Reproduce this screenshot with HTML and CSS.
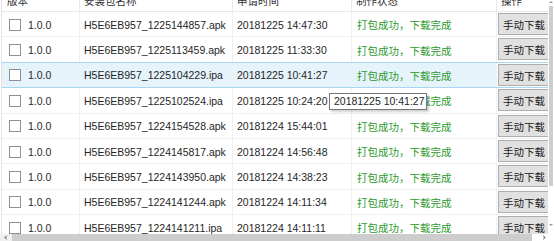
FILE: index.html
```html
<!DOCTYPE html>
<html lang="zh-CN">
<head>
<meta charset="utf-8">
<link rel="stylesheet" href="styles.css">
</head>
<body>
<div class="window">
  <div class="main">
    <div class="grid">
      <div class="row head">
        <div class="cell c1"><span class="htext">版本</span></div>
        <div class="cell"><span class="htext">安装包名称</span></div>
        <div class="cell"><span class="htext">申请时间</span></div>
        <div class="cell"><span class="htext">制作状态</span></div>
        <div class="cell"><span class="htext">操作</span></div>
      </div>
      <div class="row">
        <div class="cell c1"><span class="cb"></span>1.0.0</div>
        <div class="cell">H5E6EB957_1225144857.apk</div>
        <div class="cell">20181225 14:47:30</div>
        <div class="cell ok">打包成功，下载完成</div>
        <div class="cell act"><span class="btn">手动下载</span></div>
      </div>
      <div class="row">
        <div class="cell c1"><span class="cb"></span>1.0.0</div>
        <div class="cell">H5E6EB957_1225113459.apk</div>
        <div class="cell">20181225 11:33:30</div>
        <div class="cell ok">打包成功，下载完成</div>
        <div class="cell act"><span class="btn">手动下载</span></div>
      </div>
      <div class="row sel">
        <div class="cell c1"><span class="cb"></span>1.0.0</div>
        <div class="cell">H5E6EB957_1225104229.ipa</div>
        <div class="cell">20181225 10:41:27</div>
        <div class="cell ok">打包成功，下载完成</div>
        <div class="cell act"><span class="btn">手动下载</span></div>
      </div>
      <div class="row">
        <div class="cell c1"><span class="cb"></span>1.0.0</div>
        <div class="cell">H5E6EB957_1225102524.ipa</div>
        <div class="cell">20181225 10:24:20</div>
        <div class="cell ok">打包成功，下载完成</div>
        <div class="cell act"><span class="btn">手动下载</span></div>
      </div>
      <div class="row">
        <div class="cell c1"><span class="cb"></span>1.0.0</div>
        <div class="cell">H5E6EB957_1224154528.apk</div>
        <div class="cell">20181224 15:44:01</div>
        <div class="cell ok">打包成功，下载完成</div>
        <div class="cell act"><span class="btn">手动下载</span></div>
      </div>
      <div class="row">
        <div class="cell c1"><span class="cb"></span>1.0.0</div>
        <div class="cell">H5E6EB957_1224145817.apk</div>
        <div class="cell">20181224 14:56:48</div>
        <div class="cell ok">打包成功，下载完成</div>
        <div class="cell act"><span class="btn">手动下载</span></div>
      </div>
      <div class="row">
        <div class="cell c1"><span class="cb"></span>1.0.0</div>
        <div class="cell">H5E6EB957_1224143950.apk</div>
        <div class="cell">20181224 14:38:23</div>
        <div class="cell ok">打包成功，下载完成</div>
        <div class="cell act"><span class="btn">手动下载</span></div>
      </div>
      <div class="row">
        <div class="cell c1"><span class="cb"></span>1.0.0</div>
        <div class="cell">H5E6EB957_1224141244.apk</div>
        <div class="cell">20181224 14:11:34</div>
        <div class="cell ok">打包成功，下载完成</div>
        <div class="cell act"><span class="btn">手动下载</span></div>
      </div>
      <div class="row">
        <div class="cell c1"><span class="cb"></span>1.0.0</div>
        <div class="cell">H5E6EB957_1224141211.ipa</div>
        <div class="cell">20181224 14:11:11</div>
        <div class="cell ok">打包成功，下载完成</div>
        <div class="cell act"><span class="btn">手动下载</span></div>
      </div>
    </div>
    <div class="vscroll">
      <span class="arrow-up"></span>
      <span class="vthumb"></span>
      <span class="arrow-down"></span>
    </div>
  </div>
  <div class="hscroll">
    <span class="harrow left"></span>
    <span class="hthumb"></span>
    <span class="harrow right"></span>
  </div>
  <div class="tooltip">20181225 10:41:27</div>
</div>
</body>
</html>
```
FILE: styles.css
```css
html, body {
  margin: 0;
  padding: 0;
  background: #ffffff;
}
body {
  font-family: "Liberation Sans", "Noto Sans CJK SC", sans-serif;
  font-size: 10.5px;
  color: #262626;
}
.window {
  position: relative;
  width: 554px;
  height: 241px;
  overflow: hidden;
  display: flex;
  flex-direction: column;
}
.main {
  flex: 1;
  display: flex;
  min-height: 0;
}
.grid {
  flex: 1;
  overflow: hidden;
  border-left: 1px solid #e2e2e2;
  margin-left: 1px;
}
.row {
  display: grid;
  grid-template-columns: 78px 153px 119px 145px 60px;
  height: 25.4px;
  box-sizing: border-box;
  border-bottom: 1px solid #f0f0f0;
}
.row.head {
  height: 12px;
  border-bottom: 1px solid #e8e8e8;
}
.cell {
  display: flex;
  align-items: center;
  padding-left: 4px;
  border-right: 1px solid #f0f0f0;
  white-space: nowrap;
  overflow: hidden;
  padding-top: 1px;
}
.head .cell {
  align-items: flex-start;
  padding-top: 0;
  border-right-color: #e8e8e8;
}
.htext {
  display: block;
  margin-top: -6px;
  line-height: 14px;
  color: #333;
}
.head .c1 {
  padding-left: 5px;
}
.c1 {
  padding-left: 7px;
}
.cb {
  width: 10px;
  height: 10px;
  border: 1px solid #8f8f8f;
  background: #fff;
  margin-right: 7px;
  flex: none;
}
.ok {
  color: #2c9a2c;
  padding-left: 5px;
}
.row.sel {
  background: linear-gradient(to right, #e5f3fb 0, #e5f3fb 496px, #fff 496px);
  border-top: 1px solid #a9d6f0;
  border-bottom: 1px solid #a9d6f0;
  margin-top: -1px;
  height: 26.4px;
}
.row.sel .act {
  background: #fff;
}
.act {
  padding-left: 1px;
  align-items: flex-start;
  padding-top: 1px;
  border-right: none;
}
.btn {
  display: flex;
  align-items: center;
  box-sizing: border-box;
  height: 22px;
  width: 58px;
  padding-left: 4px;
  padding-top: 1px;
  border: 1px solid #adadad;
  background: #e1e1e1;
  color: #1a1a1a;
  font-size: 10.5px;
}
.vscroll {
  width: 6px;
  flex: none;
  display: flex;
  flex-direction: column;
  align-items: center;
  background: #fff;
}
.arrow-up {
  width: 0;
  height: 0;
  border-left: 2px solid transparent;
  border-right: 2px solid transparent;
  border-bottom: 2px solid #9a9a9a;
  margin-top: 1px;
}
.vthumb {
  width: 4px;
  height: 180px;
  margin-top: 3px;
  background: #cdcdcd;
}
.arrow-down {
  width: 0;
  height: 0;
  border-left: 2px solid transparent;
  border-right: 2px solid transparent;
  border-top: 2px solid #9a9a9a;
  margin-top: 38px;
}
.hscroll {
  height: 7px;
  flex: none;
  display: flex;
  align-items: center;
  background: #f0f0f0;
}
.harrow {
  flex: none;
  display: flex;
  align-items: center;
  justify-content: center;
  height: 7px;
}
.harrow.left {
  width: 12px;
}
.harrow.right {
  width: 22px;
  background: #fff;
}
.harrow::before {
  content: "";
  width: 2px;
  height: 2px;
  border-left: 1px solid #707070;
  border-bottom: 1px solid #707070;
}
.harrow.left::before {
  transform: rotate(45deg);
}
.harrow.right::before {
  transform: rotate(-135deg);
}
.hthumb {
  flex: 1;
  height: 7px;
  background: #cdcdcd;
}
.tooltip {
  position: absolute;
  left: 329px;
  top: 93px;
  width: 98px;
  height: 17px;
  box-sizing: border-box;
  border: 1px solid #767676;
  background: #fff;
  color: #1e1e1e;
  font-size: 10.5px;
  line-height: 15px;
  padding-left: 4px;
  white-space: nowrap;
  box-shadow: 2px 2px 2px rgba(0, 0, 0, 0.18);
}
```
